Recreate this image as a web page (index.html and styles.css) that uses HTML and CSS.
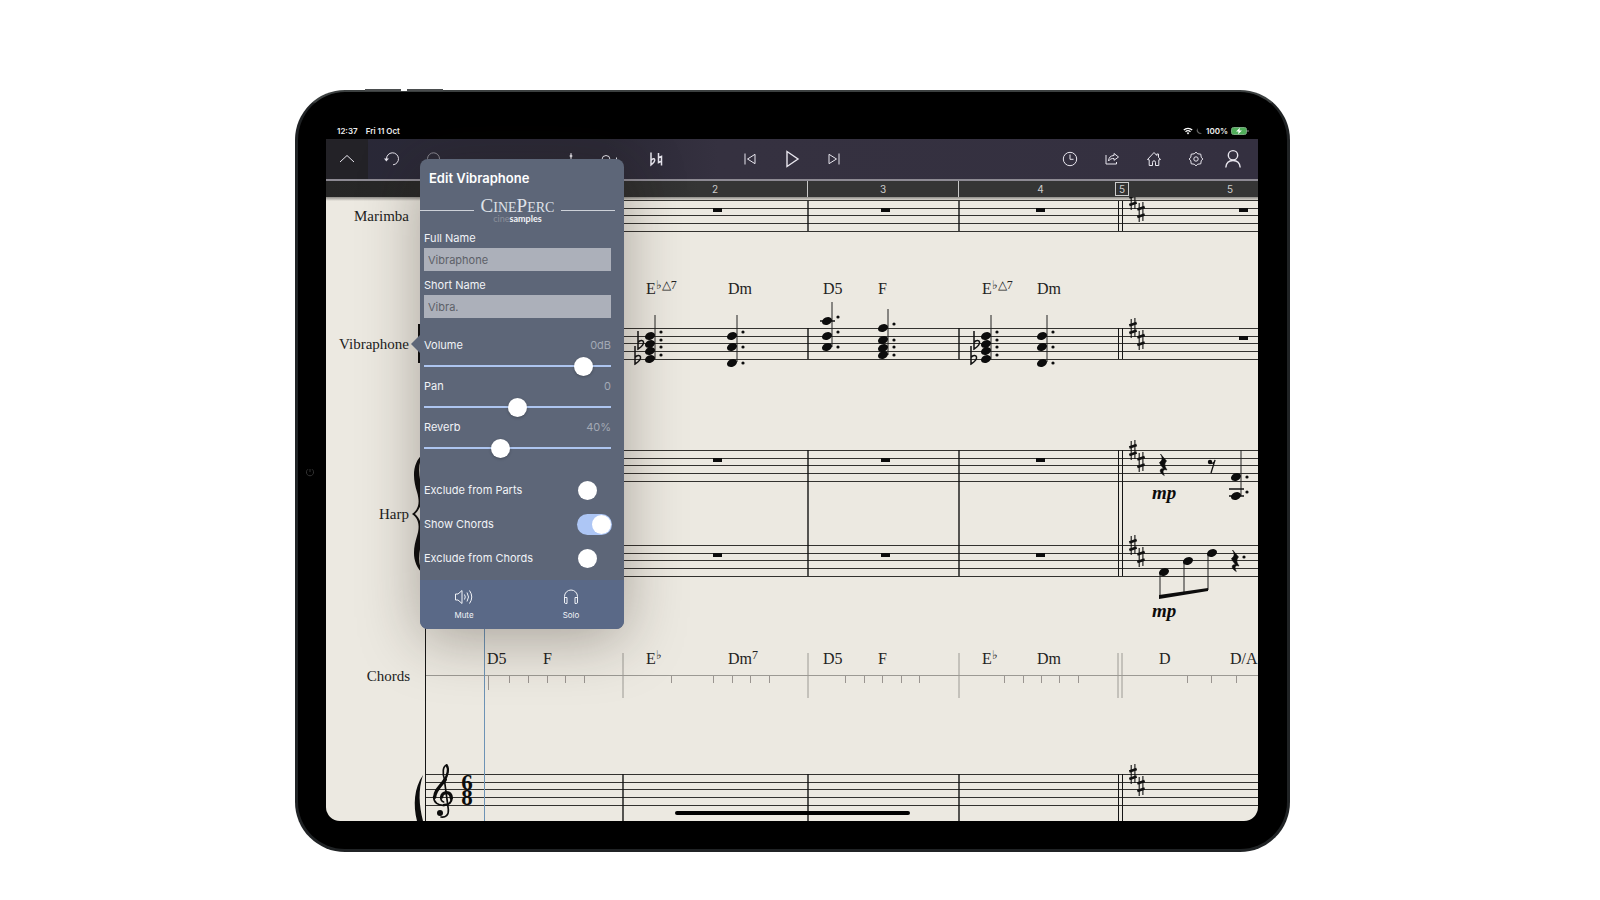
FILE: index.html
```
<!DOCTYPE html>
<html lang="en">
<head>
  <meta charset="UTF-8" />
  <meta name="viewport" content="width=device-width, initial-scale=1.0"/>
  <title>Edit Vibraphone</title>
  <link rel="stylesheet" href="styles.css">
</head>
<body>
  <div class="tablet">
    <div class="side-buttons"></div>
    <svg class="camera" viewBox="0 0 10 10"><path d="M3 2.2A3.6 3.6 0 1 0 7 2.2M5 2V5"/></svg>

    <div class="screen">
      <div class="status">
        <span>12:37</span>
        <span>Fri 11 Oct</span>
        <svg class="wifi" width="10" height="8" viewBox="0 0 10 8">
          <path d="M.8 3A6 6 0 0 1 9.2 3M2.5 4.8A3.6 3.6 0 0 1 7.5 4.8" fill="none" stroke="#fff" stroke-width="1.3"/>
          <path d="M3.7 5.9A1.8 1.8 0 0 1 6.3 5.9L5 7.6Z" fill="#fff"/>
        </svg>
        <svg width="7" height="8" viewBox="0 0 7 8"><path d="M2 1A3.2 3.2 0 1 0 6 6A3.6 3.6 0 0 1 2 1Z" fill="#666"/></svg>
        <span>100%</span>
        <svg width="18" height="8" viewBox="0 0 18 8">
          <rect x=".5" y=".5" width="15" height="7" rx="2" fill="#4fae5a" stroke="#79a87f"/>
          <path d="M9 .8L5 4.4H7.6L7 7.2L11 3.6H8.4Z" fill="#fff"/>
          <path d="M17 3V5" stroke="#888"/>
        </svg>
      </div>

      <div class="app">
        <div class="toolbar">
          <div class="tools">
            <button class="tool tool-collapse" aria-label="Collapse"><svg width="16" height="20" viewBox="0 0 16 20"><path d="M1 13L8 6.500L15 13"/></svg></button>
            <button class="tool tool-undo" aria-label="Undo"><svg width="16" height="20" viewBox="0 0 16 20"><path d="M2.500 10A6 6 0 1 1 9 15.800"/><path d="M0 9.500H5L2.300 12.500Z" fill="#e8e6ee" stroke="none"/></svg></button>
            <button class="tool" aria-label="Redo"><svg width="16" height="20" viewBox="0 0 16 20"><path d="M13.500 10A6 6 0 1 0 7 15.800" stroke="#8b8993"/></svg></button>
            <button class="tool tool-tuning" aria-label="Tuning"><svg width="16" height="20" viewBox="0 0 16 20"><path d="M8 4V18M5 11V15H11V11"/><circle cx="8" cy="7" r="1" fill="#e8e6ee"/></svg></button>
            <button class="tool tool-note" aria-label="Note"><svg width="16" height="20" viewBox="0 0 16 20"><circle cx="5" cy="10.500" r="4"/><path d="M15.500 8.500V12"/></svg></button>
            <button class="tool tool-accidental" aria-label="Accidentals"><svg width="16" height="20" viewBox="0 0 16 20"><path stroke-width="1.500" d="M3 3.500V16C5.500 14 7 12 6.600 10.500C6.200 9.200 4.500 9.500 3 11.500M10.500 4V13.500L13.500 12.200M13.500 16.500V7.500L10.500 8.800"/></svg></button>
          </div>
          <div class="tools">
            <button class="tool" aria-label="Previous bar"><svg width="14" height="20" viewBox="0 0 14 20"><path d="M2 4.500V15.500M12 5.300L4.500 10L12 14.700Z"/></svg></button>
            <button class="tool" aria-label="Play"><svg width="16" height="20" viewBox="0 0 16 20"><path stroke-width="1.400" d="M3 2.500L14 10L3 17.500Z"/></svg></button>
            <button class="tool" aria-label="Next bar"><svg width="14" height="20" viewBox="0 0 14 20"><path d="M12 4.500V15.500M2 5.300L9.500 10L2 14.700Z"/></svg></button>
          </div>
          <div class="tools tools-right">
            <button class="tool" aria-label="History"><svg width="16" height="20" viewBox="0 0 16 20"><circle cx="8" cy="10" r="6.700"/><path d="M8 5.500V10.300H11.500"/></svg></button>
            <button class="tool" aria-label="Share"><svg width="16" height="20" viewBox="0 0 16 20"><path d="M2 6V15H12.500V13M4.500 12C4.800 8.500 6.500 6.600 10 6.500V4.500L14.500 8L10 11.300V9.500C7.500 9.400 6 10 4.500 12Z"/></svg></button>
            <button class="tool" aria-label="Home"><svg width="16" height="20" viewBox="0 0 16 20"><path d="M1.500 10.500L8 3.500L10.800 6.500V5H12.500V8.300L14.500 10.500L12.800 10.800V16.500H9.500V13.300A1.500 1.500 0 0 0 6.500 13.300V16.500H3.200V10.800Z"/></svg></button>
            <button class="tool" aria-label="Settings"><svg width="16" height="20" viewBox="0 0 16 20"><path d="M6.200 4.800L8 3.200L9.800 4.800L12.800 5.200L13.200 8.200L14.800 10L13.200 11.800L12.800 14.800L9.800 15.200L8 16.800L6.200 15.200L3.200 14.800L2.800 11.800L1.200 10L2.800 8.200L3.200 5.200Z"/><circle cx="8" cy="10" r="2.200"/></svg></button>
            <button class="tool tool-user" aria-label="Account"><svg width="16" height="20" viewBox="0 0 16 20"><g stroke-width="1.400"><circle cx="8" cy="6.300" r="4.700"/><path d="M.8 18.500C1.200 14 3.500 11.500 8 11.500S14.800 14 15.200 18.500"/></g></svg></button>
          </div>
        </div>

        <div class="ruler">
          <span></span><span>2</span><span>3</span><span>4</span><span class="last"><b class="rehearsal">5</b>5</span>
        </div>

        <!-- system view, one row per instrument -->
        <svg class="score" viewBox="326 197 932 624">
          <defs>
            <path id="staff" class="line" d="M425 0H1258M425 8H1258M425 15H1258M425 23H1258M425 31H1258"/>
            <ellipse id="head" rx="5.200" ry="3.700" transform="rotate(-22)"/>
            <circle id="dot" r="1.600"/>
            <rect id="rest" x="-4" width="9" height="4"/>
            <g id="sharp">
              <path d="M-1.800 -9V10M1.900 -10V9" stroke="#111" stroke-width="1.100"/>
              <path d="M-3.700 -2.400L3.700 -5M-3.700 5L3.700 2.400" stroke="#111" stroke-width="2.600"/>
            </g>
            <g id="keysig"><use href="#sharp" x="1133"/><use href="#sharp" x="1141" y="12"/></g>
            <path id="flat" d="M0 -13V5C4 2.500 6 0 5.500 -2C5 -4 2 -4 0 -1.500" fill="none" stroke="#111" stroke-width="1.500"/>
            <g id="eflat">
              <path class="stem" d="M5 -21V23"/>
              <use href="#head"/><use href="#head" y="8"/><use href="#head" y="15"/><use href="#head" y="23"/>
              <use href="#dot" x="11" y="-4"/><use href="#dot" x="11" y="4"/><use href="#dot" x="11" y="11"/><use href="#dot" x="11" y="19"/>
              <use href="#flat" x="-12" y="8"/><use href="#flat" x="-15" y="23"/>
            </g>
            <g id="dminor">
              <path class="stem" d="M5 -21V26"/>
              <use href="#head"/><use href="#head" y="11"/><use href="#head" y="27"/>
              <use href="#dot" x="11" y="-4"/><use href="#dot" x="11" y="11"/><use href="#dot" x="11" y="27"/>
            </g>
            <path id="crotchet" stroke="#0c0c0c" stroke-width=".6" d="M-2.500 -11C0 -8 2 -6 3.500 -4C1 -1 1.500 1 4 5C1 4 -1.500 5 1.300 10.500C-3.500 8 -4.500 3.500 .5 3.500C-1.500 1 -3 -1 -3.500 -2.500C0 -5 -.5 -7.500 -2.500 -11Z"/>
          </defs>

          <!-- instrument names -->
          <g class="names">
            <text x="409" y="221">Marimba</text>
            <text x="409" y="349">Vibraphone</text>
            <text x="409" y="519">Harp</text>
            <text x="410" y="681">Chords</text>
          </g>

          <use href="#staff" y="200"/>
          <use href="#staff" y="328"/>
          <use href="#staff" y="450"/>
          <use href="#staff" y="545"/>
          <use href="#staff" y="774"/>
          <path class="line grid" d="M425 675H1258"/>

          <!-- barlines -->
          <path class="bar" d="M623 201V231M808 201V231M959 201V231M623 328V359M808 328V359M959 328V359M623 450V576M808 450V576M959 450V576M623 774V821M808 774V821M959 774V821"/>
          <path class="bar thin" d="M1118 201V231M1122 201V231M1118 328V359M1122 328V359M1118 450V576M1122 450V576M1118 774V821M1122 774V821M425 197V821"/>
          <path class="bar grid" d="M623 653V698M808 653V698M959 653V698M1118 653V698M1122 653V698"/>
          <path class="tick" d="M488 676V690M509 676V683M528 676V683M547 676V683M565 676V683M584 676V683M671 676V683M713 676V683M732 676V683M750 676V683M769 676V683M845 676V683M864 676V683M882 676V683M901 676V683M919 676V683M1004 676V683M1023 676V683M1041 676V683M1059 676V683M1078 676V683M1187 676V683M1211 676V683M1236 676V683"/>
          <path class="playhead" d="M484 197V821"/>

          <use href="#keysig" y="200"/>
          <use href="#keysig" y="328"/>
          <use href="#keysig" y="450"/>
          <use href="#keysig" y="545"/>
          <use href="#keysig" y="774"/>

          <use href="#rest" x="717" y="208"/><use href="#rest" x="885" y="208"/><use href="#rest" x="1040" y="208"/><use href="#rest" x="1243" y="208"/>
          <use href="#rest" x="1243" y="336"/>
          <use href="#rest" x="717" y="458"/><use href="#rest" x="885" y="458"/><use href="#rest" x="1040" y="458"/>
          <use href="#rest" x="717" y="553"/><use href="#rest" x="885" y="553"/><use href="#rest" x="1040" y="553"/>

          <!-- vibraphone -->
          <path d="M418 324H421V363H418Z"/>
          <use href="#eflat" x="650" y="336"/>
          <use href="#dminor" x="732" y="336"/>
          <path class="stem" d="M832 302V347M888 309V355"/>
          <path d="M820 321H835" stroke="#111" stroke-width="1.500"/>
          <use href="#head" x="827" y="321"/><use href="#head" x="827" y="336"/><use href="#head" x="827" y="347"/>
          <use href="#dot" x="838" y="317"/><use href="#dot" x="838" y="332"/><use href="#dot" x="838" y="347"/>
          <use href="#head" x="883" y="328"/><use href="#head" x="883" y="340"/><use href="#head" x="883" y="348"/><use href="#head" x="883" y="355"/>
          <use href="#dot" x="894" y="324"/><use href="#dot" x="894" y="340"/><use href="#dot" x="894" y="347"/><use href="#dot" x="894" y="355"/>
          <use href="#eflat" x="986" y="336"/>
          <use href="#dminor" x="1042" y="336"/>

          <!-- harp -->
          <path d="M424 453C411 463 413 480 417 492C420 502 419 509 412 514C419 519 420 526 417 536C413 549 411 563 424 575C416 563 420 551 422 537C423 526 420 518 415 514C420 509 423 502 422 492C420 478 416 465 424 453Z"/>
          <use href="#crotchet" x="1163" y="465"/>
          <circle cx="1210" cy="462" r="2.200"/>
          <path d="M1210 463C1213 464 1215 462 1215 460L1211 473" fill="none" stroke="#111" stroke-width="1.300"/>
          <path class="stem" d="M1241 450V496"/>
          <path d="M1229 489H1244M1229 496H1244" stroke="#111" stroke-width="1.500"/>
          <use href="#head" x="1236" y="477"/><use href="#head" x="1236" y="496"/>
          <use href="#dot" x="1247" y="477"/><use href="#dot" x="1247" y="492"/>
          <path class="stem" d="M1160 573V597M1184 561V593M1208 553V590"/>
          <path d="M1159 595L1208 588V591L1159 599Z"/>
          <use href="#head" x="1164" y="572"/><use href="#head" x="1188" y="561"/><use href="#head" x="1212" y="553"/>
          <use href="#crotchet" x="1235" y="561"/><use href="#dot" x="1244" y="557"/>
          <g class="dynamics"><text x="1152" y="499">mp</text><text x="1152" y="617">mp</text></g>

          <!-- chord symbols -->
          <g class="chords">
            <text x="646" y="294">E<tspan class="sup" dy="-5">♭△7</tspan></text>
            <text x="728" y="294">Dm</text>
            <text x="823" y="294">D5</text>
            <text x="878" y="294">F</text>
            <text x="982" y="294">E<tspan class="sup" dy="-5">♭△7</tspan></text>
            <text x="1037" y="294">Dm</text>
            <text x="487" y="664">D5</text>
            <text x="543" y="664">F</text>
            <text x="646" y="664">E<tspan class="sup" dy="-5">♭</tspan></text>
            <text x="728" y="664">Dm<tspan class="sup" dy="-5">7</tspan></text>
            <text x="823" y="664">D5</text>
            <text x="878" y="664">F</text>
            <text x="982" y="664">E<tspan class="sup" dy="-5">♭</tspan></text>
            <text x="1037" y="664">Dm</text>
            <text x="1159" y="664">D</text>
            <text x="1230" y="664">D/A</text>
          </g>

          <!-- last staff: bracket, clef, time signature -->
          <path d="M423 775C414 788 413 805 417 821H423C419 805 418 790 423 775Z"/>
          <g transform="translate(408 756) scale(.3333)" fill="none" stroke="#0c0c0c" stroke-linecap="round">
            <path stroke-width="5" d="M110 72C102 50 105 30 116 27"/>
            <path stroke-width="7" d="M116 28C123 38 120 58 108 75"/>
            <path stroke-width="10" d="M112 71C95 92 80 105 80 124"/>
            <path stroke-width="5" d="M77 122C77 140 91 149 108 148"/>
            <path stroke-width="7" d="M108 147C123 147 131 138 131 126"/>
            <path stroke-width="10" d="M130 126C129 114 124 110 116 110C107 110 101 116 101 123"/>
            <path stroke-width="5" d="M98 123C98 131 101 136 107 138M109 70L121 160C123 178 112 185 99 183"/>
            <circle cx="96" cy="171" r="9" fill="#0c0c0c" stroke="none"/>
          </g>
          <g class="meter"><text x="467" y="790">6</text><text x="467" y="805">8</text></g>
          <rect x="675" y="811" width="235" height="4" rx="2" fill="#000"/>
        </svg>

        <form class="popover">
          <h1>Edit Vibraphone</h1>
          <div class="brand">
            <div class="brand-name"><big>C</big>INE<big>P</big>ERC</div>
            <div class="brand-maker"><i>cine</i>samples</div>
          </div>

          <label for="full-name">Full Name</label>
          <input type="text" id="full-name" value="Vibraphone">
          <label for="short-name">Short Name</label>
          <input type="text" id="short-name" value="Vibra.">

          <div class="sliders">
            <div class="row"><label for="volume">Volume</label><output>0dB</output></div>
            <input type="range" id="volume" min="0" max="100" value="89">
            <div class="row"><label for="pan">Pan</label><output>0</output></div>
            <input type="range" id="pan" min="-50" max="50" value="0">
            <div class="row"><label for="reverb">Reverb</label><output>40%</output></div>
            <input type="range" id="reverb" min="0" max="100" value="40">
          </div>

          <div class="switches">
            <div class="row"><label for="no-parts">Exclude from Parts</label><input type="checkbox" id="no-parts"></div>
            <div class="row"><label for="show-chords">Show Chords</label><input type="checkbox" id="show-chords" checked></div>
            <div class="row"><label for="no-chords">Exclude from Chords</label><input type="checkbox" id="no-chords"></div>
          </div>

          <div class="actions">
            <button type="button">
              <svg width="20" height="18" viewBox="0 0 20 18"><path d="M1.500 6H4L8 2.500V15.500L4 12H1.500ZM10.500 6.500Q12 9 10.500 11.500M13 4.500Q16 9 13 13.500M15.500 2.500Q20 9 15.500 15.500"/></svg>
              Mute
            </button>
            <button type="button">
              <svg width="20" height="18" viewBox="0 0 20 18"><path d="M3.500 14V8.500A6.500 6.500 0 0 1 16.500 8.500V14M3.500 9.500H6V15.500H4.500Q3.500 15.500 3.500 14ZM16.500 9.500H14V15.500H15.500Q16.500 15.500 16.500 14Z"/></svg>
              Solo
            </button>
          </div>
        </form>
      </div>
    </div>
  </div>
</body>
</html>
```
FILE: styles.css
```
* {
  box-sizing: border-box;
}

body {
  margin: 0;
  padding: 90px 0 48px;
  background: #fff;
  font-family: Inter, "Liberation Sans", sans-serif;
  display: grid;
  /* the tablet sits a little left of centre */
  grid-template-columns: 295fr 995fr 310fr;
}

button {
  border: none;
  background: none;
  padding: 0;
  color: inherit;
  font-family: inherit;
  cursor: pointer;
}

.tablet {
  grid-column: 2;
  position: relative;
  padding: 32px 29px 28px 28px;
  background: #000;
  border: 3px solid #202325;
  border-top: 2px solid #3c4040;
  padding-top: 33px;
  border-radius: 50px;
}

.side-buttons {
  position: absolute;
  top: -3px;
  left: 67px;
  width: 78px;
  height: 2px;
  background: linear-gradient(to right, #4a4d4e 46%, #fff 46%, #fff 54%, #4a4d4e 54%);
}

.camera {
  position: absolute;
  left: 7px;
  top: 50%;
  width: 10px;
  margin-top: -4px;
  fill: none;
  stroke: #333;
}

.status {
  display: flex;
  align-items: center;
  gap: 3px;
  height: 14px;
  padding: 0 9px 3px 11px;
  font-size: 8px;
  font-weight: 600;
  color: #eee;
}

.status span:first-child {
  margin-right: 5px;
}

.wifi {
  margin-left: auto;
}

.app {
  position: relative;
  border-radius: 0 0 14px 14px;
  background: #ece9e1;
}

/* toolbar */
.toolbar {
  display: grid;
  grid-template-columns: 1fr auto 1fr;
  height: 40px;
  background: linear-gradient(to right, #2a2938, #2b2936 30%, #353140 42%, #343040);
}

.tools {
  display: flex;
}

.tools-right {
  justify-content: flex-end;
  padding-right: 9px;
}

.tool {
  display: flex;
  flex: none;
  align-items: center;
  justify-content: center;
  width: 42px;
}

.tool svg {
  fill: none;
  stroke: #e8e6ee;
}

.tool-collapse {
  background: #232227;
}

.tool-undo {
  margin-left: 3px;
}

.tool-tuning {
  margin-left: 95px;
}

.tool-note {
  width: 34px;
}

.tool-accidental {
  margin-left: 9px;
}

.tool-user {
  width: 32px;
}

/* bar numbers */
.ruler {
  display: grid;
  grid-template-columns: 297fr 184fr 151fr 164fr 136fr;
  height: 18px;
  border-top: 2px solid #8d8a93;
  background: linear-gradient(to right, #262626, #2c2c2c 30%, #353535 40%);
  color: #ccc;
  font-size: 10px;
  line-height: 16px;
  text-align: center;
}

.ruler span:nth-child(3),
.ruler span:nth-child(4) {
  border-left: 1px solid #c8c8c8;
}

.ruler .last {
  position: relative;
  text-align: right;
  padding-right: 25px;
}

.rehearsal {
  position: absolute;
  left: -7px;
  top: 1px;
  width: 14px;
  height: 14px;
  border: 1px solid #ccc;
  background: #333;
  font-weight: 400;
  line-height: 12px;
  text-align: center;
}

/* score */
.score {
  display: block;
  width: 100%;
  border-radius: 0 0 14px 14px;
  background: linear-gradient(#8e8c88, rgba(142, 140, 136, 0) 4px);
  fill: #0c0c0c;
}

.line {
  stroke: #33322f;
  stroke-width: 1;
  shape-rendering: crispEdges;
}

.bar {
  stroke: #151515;
  stroke-width: 1.4;
}

.bar.thin {
  stroke-width: 1;
  shape-rendering: crispEdges;
}

.line.grid,
.bar.grid {
  stroke: #9c9a94;
  stroke-width: 1;
}

.tick {
  stroke: #9a9590;
  shape-rendering: crispEdges;
}

.playhead {
  stroke: #6d93b5;
  shape-rendering: crispEdges;
}

.stem {
  stroke: #222;
  stroke-width: 1;
}

.names {
  font: 15px "Liberation Serif", serif;
  text-anchor: end;
  fill: #222;
}

.chords {
  font: 16px "Liberation Serif", serif;
  fill: #222;
}

.sup {
  font-size: 12px;
}

.dynamics {
  font: italic bold 19px "Liberation Serif", serif;
}

.meter {
  font: bold 23px "Liberation Serif", serif;
  text-anchor: middle;
}

/* instrument popover */
.popover {
  position: absolute;
  top: 20px;
  left: 94px;
  width: 204px;
  border-radius: 8px;
  background: #5d6678;
  box-shadow: 0 10px 60px rgba(40, 30, 20, 0.35);
  color: #f1f3f7;
  font-size: 11px;
  line-height: 16px;
}

/* arrow towards the instrument name */
.popover::before {
  content: "";
  position: absolute;
  left: -9px;
  top: 176px;
  border: 9px solid transparent;
  border-left: 0;
  border-right-color: #5d6678;
}

.popover h1 {
  margin: 0;
  padding-left: 9px;
  font-size: 13px;
  font-weight: 600;
  line-height: 38px;
  color: #fff;
}

.brand {
  position: relative;
  height: 33px;
  padding-right: 9px;
  text-align: center;
}

.brand::before,
.brand::after {
  content: "";
  position: absolute;
  top: 13px;
  left: 0;
  width: 54px;
  height: 1px;
  background: #cdd1d8;
}

.brand::after {
  left: 141px;
}

.brand-name {
  font: 14px/18px "Liberation Serif", serif;
  color: #dfe2e8;
}

.brand-name big {
  font-size: 19px;
}

.brand-maker {
  font-family: Lato, sans-serif;
  font-size: 9px;
  font-weight: 700;
  line-height: 4px;
}

.brand-maker i {
  font-style: normal;
  font-weight: 400;
  color: #8b8f9a;
}

.popover label {
  display: block;
}

.popover > label {
  padding-left: 4px;
}

.popover input[type="text"] {
  display: block;
  width: 187px;
  height: 23px;
  margin: 2px 0 6px 4px;
  padding: 0 4px;
  border: none;
  background: #acb0ba;
  color: #5d6068;
  font: inherit;
}

.sliders {
  padding: 13px 13px 0 4px;
}

.row {
  display: flex;
  justify-content: space-between;
}

output {
  color: #a3a9b5;
}

input[type="range"] {
  -webkit-appearance: none;
  appearance: none;
  display: block;
  width: 100%;
  height: 20px;
  margin: 3px 0 2px;
  background: linear-gradient(#adc5f0, #adc5f0) center / 100% 2px no-repeat;
}

input[type="range"]::-webkit-slider-thumb {
  -webkit-appearance: none;
  width: 19px;
  height: 19px;
  border-radius: 50%;
  background: #fff;
  box-shadow: 0 1px 3px rgba(0, 0, 0, 0.25);
}

.switches {
  padding: 13px 12px 5px 4px;
}

.switches .row {
  height: 34px;
  align-items: center;
}

input[type="checkbox"] {
  -webkit-appearance: none;
  appearance: none;
  display: flex;
  align-items: center;
  width: 35px;
  height: 21px;
  margin: 0;
  border-radius: 11px;
}

input[type="checkbox"]::before {
  content: "";
  width: 19px;
  height: 19px;
  margin-left: 1px;
  border-radius: 50%;
  background: #fff;
}

input[type="checkbox"]:checked {
  justify-content: flex-end;
  padding-right: 1px;
  background: #adc6f5;
}

.actions {
  display: flex;
  justify-content: space-between;
  height: 49px;
  padding: 2px 24px 0 15px;
  border-radius: 0 0 8px 8px;
  background: #5a6987;
}

.actions button {
  display: flex;
  flex-direction: column;
  align-items: center;
  justify-content: center;
  gap: 1px;
  width: 58px;
  font-size: 8px;
  line-height: 16px;
}

.actions svg {
  fill: none;
  stroke: #f1f3f7;
}
```
